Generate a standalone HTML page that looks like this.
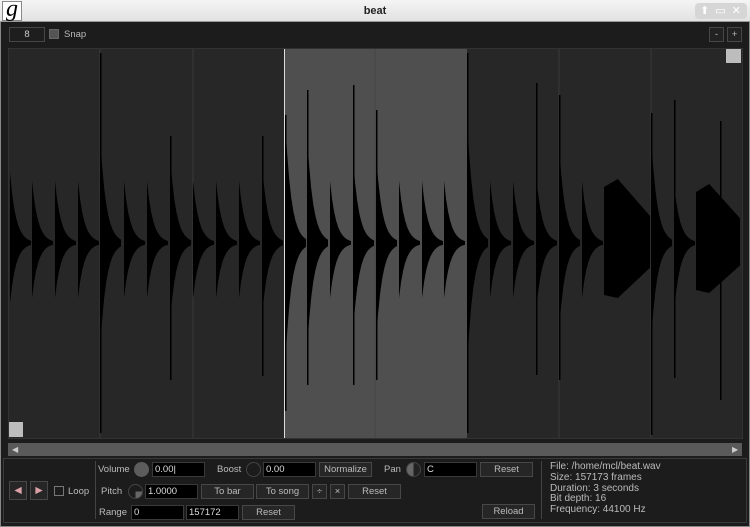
<!DOCTYPE html>
<html><head><meta charset="utf-8"><style>
*{margin:0;padding:0;box-sizing:border-box}
body{width:750px;height:527px;background:#1c1c1c;font-family:"Liberation Sans","DejaVu Sans",sans-serif;font-size:9.5px;color:#c8c8c8;position:relative;overflow:hidden}
.a{position:absolute}
.tb{left:0;top:0;width:750px;height:22px;background:linear-gradient(#f4f4f4,#e2e2e2);border-bottom:1px solid #999;color:#222;text-align:center;font-weight:bold;font-size:11px;line-height:22px}
.in{position:absolute;background:#000;border:1px solid #3a3a3a;color:#ddd;height:15px;line-height:13px;padding-left:2px;font-size:9.5px}
.bt{position:absolute;background:#262626;border:1px solid #474747;color:#bbb;height:15px;line-height:13px;text-align:center;font-size:9.5px}
.lb{position:absolute;font-size:9.5px;color:#bbb}
.kn{position:absolute;width:15px;height:15px;border-radius:50%}
</style></head><body>
<div class="a tb">beat</div>
<div class="a" style="left:2px;top:1px;width:20px;height:20px;background:#fff;border:1px solid #888;font-family:'Liberation Serif',serif;font-style:italic;font-size:24px;line-height:14px;color:#000;text-align:center">g</div>
<div class="a" style="left:695px;top:3px;width:52px;height:16px;border-radius:4px;background:#d6d6d6;color:#fff;font-size:11px;line-height:16px;letter-spacing:6px;padding-left:5px">⬆▭✕</div>
<div class="a" style="left:0;top:22px;width:1px;height:505px;background:#888"></div>
<div class="a" style="left:749px;top:22px;width:1px;height:505px;background:#888"></div>
<div class="a" style="left:0;top:526px;width:750px;height:1px;background:#888"></div>

<div class="bt" style="left:9px;top:27px;width:36px;height:15px;background:#1e1e1e;color:#ccc">8</div>
<div class="a" style="left:49px;top:29px;width:10px;height:10px;background:#555;border:1px solid #666"></div>
<div class="lb" style="left:64px;top:29px">Snap</div>
<div class="bt" style="left:709px;top:27px;width:15px;background:#222">-</div>
<div class="bt" style="left:727px;top:27px;width:15px;background:#222">+</div>

<svg class="a" style="left:8px;top:48px" width="735" height="391">
<rect x="0" y="0" width="735" height="391" fill="#272727" stroke="#3c3c3c"/>
<rect x="276" y="1" width="183" height="389" fill="#4f4f4f"/>
<g stroke="#3a3a3a" stroke-width="1">
<line x1="92" y1="1" x2="92" y2="390"/><line x1="185" y1="1" x2="185" y2="390"/><line x1="367" y1="1" x2="367" y2="390" stroke="#444"/><line x1="551" y1="1" x2="551" y2="390"/><line x1="643" y1="1" x2="643" y2="390"/>
</g>
<line x1="276.5" y1="1" x2="276.5" y2="390" stroke="#ddd"/>
<g id="w" fill="#000"></g>
<rect x="718" y="1" width="15" height="14" fill="#bdbdbd"/>
<rect x="1" y="374" width="14" height="15" fill="#bdbdbd"/>
</svg>

<div class="a" style="left:8px;top:443px;width:734px;height:13px;background:#5a5a5a"></div>
<div class="a" style="left:12px;top:445px;color:#ccc;font-size:8px">◀</div>
<div class="a" style="left:732px;top:445px;color:#ccc;font-size:8px">▶</div>

<div class="a" style="left:3px;top:458px;width:744px;height:65px;border:1px solid #3a3a3a"></div>
<div class="a" style="left:95px;top:461px;width:1px;height:58px;background:#444"></div>
<div class="a" style="left:541px;top:461px;width:1px;height:58px;background:#444"></div>

<div class="bt" style="left:9px;top:481px;width:18px;height:19px;color:#d9a0a8;line-height:17px">◀</div>
<div class="bt" style="left:30px;top:481px;width:18px;height:19px;color:#d9a0a8;line-height:17px">▶</div>
<div class="a" style="left:54px;top:486px;width:10px;height:10px;border:1px solid #777"></div>
<div class="lb" style="left:68px;top:486px">Loop</div>

<div class="lb" style="left:98px;top:464px">Volume</div>
<div class="kn" style="left:134px;top:462px;background:#5c5c5c"></div>
<div class="in" style="left:152px;top:462px;width:53px">0.00|</div>
<div class="lb" style="left:217px;top:464px">Boost</div>
<div class="kn" style="left:246px;top:462px;border:1px solid #444;background:#1c1c1c"></div>
<div class="in" style="left:263px;top:462px;width:53px">0.00</div>
<div class="bt" style="left:319px;top:462px;width:53px">Normalize</div>
<div class="lb" style="left:384px;top:464px">Pan</div>
<div class="kn" style="left:406px;top:462px;background:linear-gradient(90deg,#666 50%,#222 50%);border:1px solid #444"></div>
<div class="in" style="left:424px;top:462px;width:53px">C</div>
<div class="bt" style="left:480px;top:462px;width:53px">Reset</div>

<div class="lb" style="left:101px;top:486px">Pitch</div>
<div class="kn" style="left:128px;top:484px;background:conic-gradient(#1c1c1c 0 90deg,#666 90deg 180deg,#1c1c1c 180deg);border:1px solid #444"></div>
<div class="in" style="left:145px;top:484px;width:53px">1.0000</div>
<div class="bt" style="left:201px;top:484px;width:53px">To bar</div>
<div class="bt" style="left:256px;top:484px;width:53px">To song</div>
<div class="bt" style="left:312px;top:484px;width:15px">÷</div>
<div class="bt" style="left:330px;top:484px;width:15px">×</div>
<div class="bt" style="left:348px;top:484px;width:53px">Reset</div>

<div class="lb" style="left:99px;top:507px">Range</div>
<div class="in" style="left:131px;top:505px;width:53px">0</div>
<div class="in" style="left:186px;top:505px;width:53px">157172</div>
<div class="bt" style="left:242px;top:505px;width:53px">Reset</div>
<div class="bt" style="left:482px;top:504px;width:53px">Reload</div>

<div class="lb" style="left:550px;top:462px;line-height:10.8px;font-size:10px">File: /home/mcl/beat.wav<br>Size: 157173 frames<br>Duration: 3 seconds<br>Bit depth: 16<br>Frequency: 44100 Hz</div>

<script>
var c=195,g=document.getElementById('w'),s='';
function kick(x,t,b,L){L=L||21;var up=[],dn=[];for(var i=0;i<=10;i++){var dx=L*i/10,f=Math.exp(-dx/6);up.push([x+dx,c-Math.max(1,t*f)]);dn.unshift([x+dx,c+Math.max(1,b*f)]);}
var pts=[[x,c]].concat(up,dn);s+='<polygon points="'+pts.map(function(p){return p[0].toFixed(1)+','+p[1].toFixed(1)}).join(' ')+'"/>';}
function line(x,t,b){s+='<rect x="'+x+'" y="'+(c-t)+'" width="1.5" height="'+(t+b)+'"/>';}
function noise(x,w,t,b){s+='<polygon points="'+x+','+(c-t+4)+' '+(x+w*0.3)+','+(c-t-4)+' '+(x+w)+','+(c-t*0.45)+' '+(x+w)+','+(c+b*0.45)+' '+(x+w*0.3)+','+(c+b)+' '+x+','+(c+b-3)+'"/>';}
var K=[[2,70,60],[24,62,55],[47,62,55],[70,62,55],[116,62,55],[139,62,55],[185,62,55],[208,62,55],[231,62,55],[322,62,55],[345,55,50],[391,62,55],[414,62,55],[436,62,55],[482,62,55],[505,62,55],[574,62,55]];
K.forEach(function(k){kick(k[0],k[1],k[2]);});
kick(92,110,110);line(92,190,190);
kick(162,90,80);line(162,107,137);
kick(254,80,75);line(254,107,133);
kick(277,128,128);line(277,128,168);
kick(299,110,110);line(299,153,142);
line(345,158,142);kick(345,85,90);
kick(368,90,100);line(368,133,137);
kick(459,128,128);line(459,190,190);
line(528,160,132);kick(528,70,70);
line(551,148,137);kick(551,100,90);
noise(596,46,60,55);
kick(643,110,100);line(643,130,192);
line(666,143,135);kick(666,60,70);
noise(688,44,55,50);
line(712,122,157);
g.innerHTML=s;
</script>
</body></html>
